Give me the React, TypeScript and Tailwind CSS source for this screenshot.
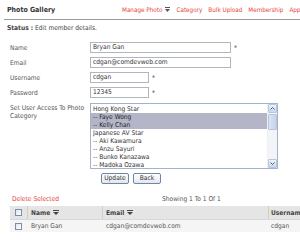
import React from "react";

const FONT = { fontFamily: '"DejaVu Sans Condensed", "Liberation Sans", sans-serif' };

function SortIcon({ color = "#555" }: { color?: string }) {
  return (
    <svg width="6" height="5" viewBox="0 0 6 5" className="inline-block ml-[3px]">
      <rect x="0" y="0" width="6" height="1" fill={color} />
      <polygon points="0,2 6,2 3,5" fill={color} />
    </svg>
  );
}

function Check() {
  return (
    <div className="w-[7px] h-[7px] border border-[#7b8fab] bg-gradient-to-br from-[#dfe6ee] to-white" />
  );
}

function Field({ label, value, wide, star = true }: { label: string; value: string; wide?: boolean; star?: boolean }) {
  return (
    <div className="flex items-center h-[11px]">
      <div className="w-[90px] shrink-0 pl-[10px] text-[#555]">{label}</div>
      <div
        className={`${wide ? "w-[141px]" : "w-[59px]"} h-[11px] border border-[#b0b5be] bg-white pl-[2px] leading-[9px] text-[#333]`}
      >
        {value}
      </div>
      {star && <span className="ml-[3px] text-[#444]">*</span>}
    </div>
  );
}

const items = [
  { t: "Hong Kong Star", sel: false },
  { t: "-- Faye Wong", sel: true },
  { t: "-- Kelly Chan", sel: true },
  { t: "Japanese AV Star", sel: false },
  { t: "-- Aki Kawamura", sel: false },
  { t: "-- Anzu Sayuri", sel: false },
  { t: "-- Bunko Kanazawa", sel: false },
  { t: "-- Madoka Ozawa", sel: false },
];

export default function App() {
  return (
    <div className="w-[300px] h-[245px] overflow-hidden bg-white text-[6.6px] leading-[8px]" style={FONT}>
      {/* Header */}
      <div className="ml-[4px] h-[20px] border-b border-[#9a9a9a] flex items-center pl-[3px] whitespace-nowrap">
        <div className="w-[115px] shrink-0 font-bold text-[#333] text-[7px]">Photo Gallery</div>
        <div className="flex items-center gap-[6px] text-[#e4433b] text-[6.3px]">
          <span className="flex items-center">
            Manage Photo
            <svg width="5" height="5" viewBox="0 0 5 5" className="ml-[3px]">
              <rect x="0" y="0" width="5" height="1" fill="#555" />
              <polygon points="0,2 5,2 2.5,5" fill="#555" />
            </svg>
          </span>
          <span>Category</span>
          <span>Bulk Upload</span>
          <span>Membership</span>
          <span>Applications</span>
        </div>
      </div>

      {/* Status */}
      <div className="mt-[4px] pl-[7px] text-[#444]">
        <span className="font-bold">Status :</span> Edit member details.
      </div>

      {/* Form */}
      <div className="mt-[10px] flex flex-col gap-[4px]">
        <Field label="Name" value="Bryan Gan" wide />
        <Field label="Email" value="cdgan@comdevweb.com" wide star={false} />
        <Field label="Username" value="cdgan" />
        <Field label="Password" value="12345" />
      </div>

      <div className="mt-[5px] flex">
        <div className="w-[90px] shrink-0 pl-[10px] pr-[4px] pt-[1px] text-[#555]">Set User Access To Photo Category</div>
        <div className="w-[188px] h-[66px] border border-[#a3b3cc] flex bg-white">
          <div className="flex-1 flex flex-col pt-[1px]">
            {items.map((it) => (
              <div
                key={it.t}
                className={`h-[8px] leading-[8px] pl-[2px] whitespace-nowrap ${it.sel ? "bg-[#b4b6c8] text-[#222]" : "text-[#333]"}`}
              >
                {it.t}
              </div>
            ))}
          </div>
          <div className="w-[10px] flex flex-col bg-[#f3f4f8] border-l border-[#eef0f5]">
            <div className="h-[9px] border border-[#b8c6dc] rounded-[1px] bg-gradient-to-b from-[#eef3fb] to-[#c9d6ea] flex items-center justify-center">
              <svg width="5" height="3" viewBox="0 0 5 3">
                <polyline points="0.5,2.5 2.5,0.5 4.5,2.5" fill="none" stroke="#4d6185" strokeWidth="1" />
              </svg>
            </div>
            <div className="h-[16px] mt-[1px] border border-[#b8c6dc] rounded-[1px] bg-gradient-to-r from-[#dbe4f4] to-[#c5d3ea]" />
            <div className="flex-1" />
            <div className="h-[9px] border border-[#b8c6dc] rounded-[1px] bg-gradient-to-b from-[#eef3fb] to-[#c9d6ea] flex items-center justify-center">
              <svg width="5" height="3" viewBox="0 0 5 3">
                <polyline points="0.5,0.5 2.5,2.5 4.5,0.5" fill="none" stroke="#4d6185" strokeWidth="1" />
              </svg>
            </div>
          </div>
        </div>
      </div>

      {/* Buttons */}
      <div className="mt-[4px] ml-[101px] flex gap-[4px]">
        <button className="w-[28px] h-[11px] border border-[#6f86a9] rounded-[2px] bg-gradient-to-b from-white to-[#e4e6ee] text-[#333] leading-[9px]">
          Update
        </button>
        <button className="w-[28px] h-[11px] border border-[#6f86a9] rounded-[2px] bg-gradient-to-b from-white to-[#e4e6ee] text-[#333] leading-[9px]">
          Back
        </button>
      </div>

      {/* List */}
      <div className="mt-[11px] flex whitespace-nowrap">
        <div className="w-[162px] shrink-0 pl-[12px] text-[#e4433b]">Delete Selected</div>
        <div className="text-[#555]">Showing 1 To 1 Of 1</div>
      </div>

      <div className="mt-[3px] ml-[10px] whitespace-nowrap">
        <div className="flex h-[14px] bg-[#e5e5e5] border-b border-[#d8d8d8] font-bold text-[#444]">
          <div className="w-[17px] shrink-0 flex items-center justify-center">
            <Check />
          </div>
          <div className="w-[75px] shrink-0 border-l border-[#cfcfcf] flex items-center pl-[3px]">
            Name <SortIcon color="#444" />
          </div>
          <div className="w-[166px] shrink-0 border-l border-[#cfcfcf] flex items-center pl-[3px]">
            Email <SortIcon color="#444" />
          </div>
          <div className="flex-1 border-l border-[#cfcfcf] flex items-center pl-[2px]">Username</div>
        </div>
        <div className="flex h-[12px] bg-[#f5f5f5] text-[#555]">
          <div className="w-[17px] shrink-0 flex items-center justify-center">
            <Check />
          </div>
          <div className="w-[75px] shrink-0 flex items-center pl-[4px]">Bryan Gan</div>
          <div className="w-[166px] shrink-0 flex items-center pl-[4px]">cdgan@comdevweb.com</div>
          <div className="flex-1 flex items-center pl-[3px]">cdgan</div>
        </div>
      </div>
    </div>
  );
}
